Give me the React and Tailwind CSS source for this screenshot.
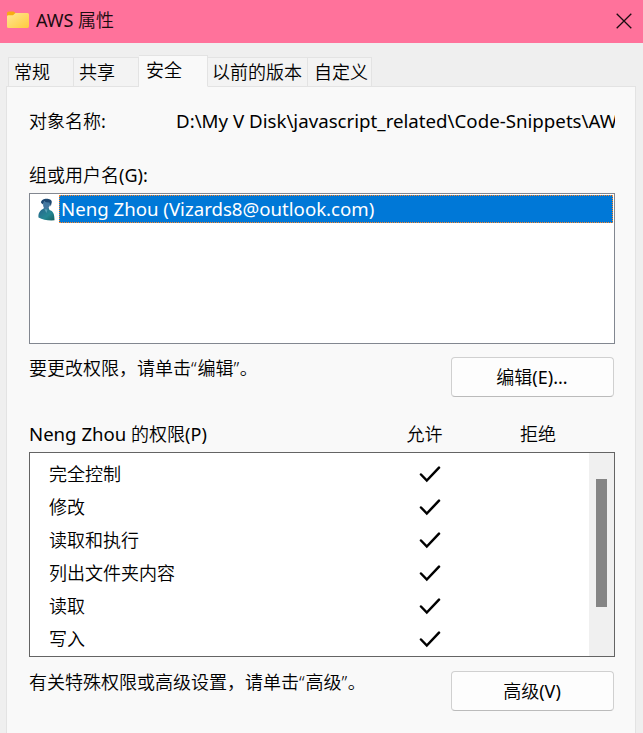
const tabs = [
  { name: '常规', box: 'h-[30px] w-[66px] pl-[5px]' },
  { name: '共享', box: 'h-[30px] w-[65px] pl-[5px] border-l-0' },
  { name: '安全', active: true, box: 'h-[32px] w-[69px] pl-[7px] border-l-0' },
  { name: '以前的版本', box: 'h-[30px] w-[100px] pl-[4px] border-l-0' },
  { name: '自定义', box: 'h-[30px] w-[64px] pl-[6px] border-l-0' },
];

const permissions = ['完全控制', '修改', '读取和执行', '列出文件夹内容', '读取', '写入'];

function FolderIcon() {
  return (
    <svg className="h-[18px] w-[23px] shrink-0" viewBox="0 0 23 18">
      <defs>
        <linearGradient id="folder" x1="0" y1="0" x2="1" y2="1">
          <stop offset="0" stopColor="#ffe694" />
          <stop offset="1" stopColor="#ffcb3d" />
        </linearGradient>
      </defs>
      <path d="M0 2Q0 0.500 2 0.500H6.500L8.500 2H15V8H0Z" fill="#f8ac12" />
      <path d="M0 5.500Q0 4.200 1.500 4.200H6L8.500 2H20.500Q22 2 22 3.500V15.300Q22 17 20.500 17H1.500Q0 17 0 15.500Z" fill="url(#folder)" />
    </svg>
  );
}

function UserIcon() {
  return (
    <svg className="h-[23px] w-[18px] shrink-0" viewBox="0 0 18 23">
      <defs>
        <linearGradient id="coat" x1="0" y1="0" x2="1" y2="1">
          <stop offset="0" stopColor="#27618a" />
          <stop offset="0.600" stopColor="#258793" />
          <stop offset="1" stopColor="#17605f" />
        </linearGradient>
      </defs>
      <path d="M0.500 19.500C0 15 2 12.500 5 11L6.500 9.500H10.500L11.500 12C15 13 16.500 15.500 16.500 22.300Q7 23 0.500 19.500Z" fill="url(#coat)" />
      <path d="M5 3.500L5.200 8Q6 11.500 8.500 11.500Q11.500 10 13 4Z" fill="#4478a0" />
      <path d="M3 4.500C3 -0.500 13.800 -0.500 13.800 4L12.800 8.500L11.500 4.500Q8 4.500 6 3.500L4.500 6.500Z" fill="#1c4770" />
      <path d="M6.300 11L8.500 15L9.500 11.500Z" fill="#58a0b4" />
    </svg>
  );
}

function Check() {
  return (
    <svg className="h-[18px] w-[22px]" viewBox="0 0 22 18" fill="none">
      <path d="M2 8.500L7.800 14.500L20 1.700" stroke="#000" strokeWidth="2.500" strokeLinecap="round" />
    </svg>
  );
}

function Button({ children, hotkey }) {
  return (
    <button className="flex h-10 w-[163px] items-center justify-center rounded-[4px] border border-[#d0d0d0] border-b-[#bbbbbb] bg-[#fdfdfd] pr-px pb-px">
      {children}
      <span className="font-normal">{hotkey}</span>
    </button>
  );
}

export default function App() {
  return (
    <div className="flex h-[733px] w-[643px] flex-col overflow-hidden bg-[#efefef] font-['Noto_Sans','Noto_Sans_CJK_SC',sans-serif] text-[18px] leading-6 font-[350] whitespace-nowrap text-black">
      <header className="flex h-[43px] shrink-0 items-center justify-between bg-[#ff729b] pr-[11px] pb-[2px] pl-[7px]">
        <div className="flex items-center gap-[6px] pb-px">
          <FolderIcon />
          <h1 className="text-[18px] font-[350] text-[#1a0c10]">
            <span className="font-normal">AWS </span>属性
          </h1>
        </div>
        <svg className="h-4 w-4" viewBox="0 0 16 16" stroke="#1a0c10" strokeWidth="1.300">
          <path d="M0.700 0.700L15.300 15.300M15.300 0.700L0.700 15.300" />
        </svg>
      </header>

      <nav className="flex h-[44px] shrink-0 items-end pl-2">
        {tabs.map((t) => (
          <div
            key={t.name}
            className={`relative border border-[#e3e3e3] pt-[2px] ${t.box} ${t.active ? 'z-10 border-b-[#f9f9f9] bg-[#f9f9f9]' : 'bg-[#f3f3f3]'}`}
          >
            {t.name}
          </div>
        ))}
      </nav>

      <main className="-mt-px ml-[6px] flex h-[660px] w-[630px] shrink-0 flex-col border border-[#e3e3e3] bg-[#f9f9f9] pr-[20px] pl-[22px]">
        <div className="flex h-[106px] flex-col justify-between pt-[22px] pb-[6px]">
          <div className="flex">
            <span className="w-[147px] shrink-0">
              对象名称<span className="font-normal">:</span>
            </span>
            <span className="w-[439px] overflow-hidden text-[18.700px] font-normal">D:\My V Disk\javascript_related\Code-Snippets\AW</span>
          </div>
          <span>
            组或用户名<span className="font-normal">(G):</span>
          </span>
        </div>

        <div className="h-[151px] w-[586px] border border-[#828790] bg-white p-px">
          <div className="flex h-[28px] items-center">
            <div className="flex w-[28px] shrink-0 justify-center pl-[3px]">
              <UserIcon />
            </div>
            <div className="flex h-[28px] flex-1 items-center border border-dotted border-[#ff8728] bg-[#0078d7] pl-px text-[18.650px] font-normal text-white">
              Neng Zhou (Vizards8@outlook.com)
            </div>
          </div>
        </div>

        <div className="flex h-[78px] w-[585px] items-start justify-between pt-[13px]">
          <p className="-mt-px">
            要更改权限，请单击<span className="tracking-[0.800px]">“</span>编辑<span className="tracking-[0.800px]">”</span>。
          </p>
          <Button hotkey="(E)...">编辑</Button>
        </div>

        <div className="flex h-[30px] items-start">
          <span className="w-[377.500px]">
            <span className="text-[18.600px] font-normal">Neng Zhou </span>的权限<span className="font-normal">(P)</span>
          </span>
          <span className="w-[113.500px]">允许</span>
          <span>拒绝</span>
        </div>

        <div className="flex h-[205px] w-[586px] justify-between border border-[#646464] bg-white">
          <div className="flex flex-col pt-[5px] pl-[19px]">
            {permissions.map((p) => (
              <div key={p} className="flex h-[33px] items-center">
                <span className="w-[370px] pb-[2px]">{p}</span>
                <Check />
              </div>
            ))}
          </div>
          <div className="flex w-[25px] justify-center bg-[#f0f0f0] pt-[26px]">
            <div className="h-[128px] w-[11px] bg-[#858585]" />
          </div>
        </div>

        <div className="flex w-[585px] items-start justify-between pt-[14px]">
          <p className="-mt-px">
            有关特殊权限或高级设置，请单击<span className="tracking-[0.800px]">“</span>高级<span className="tracking-[0.800px]">”</span>。
          </p>
          <Button hotkey="(V)">高级</Button>
        </div>
      </main>
    </div>
  );
}
